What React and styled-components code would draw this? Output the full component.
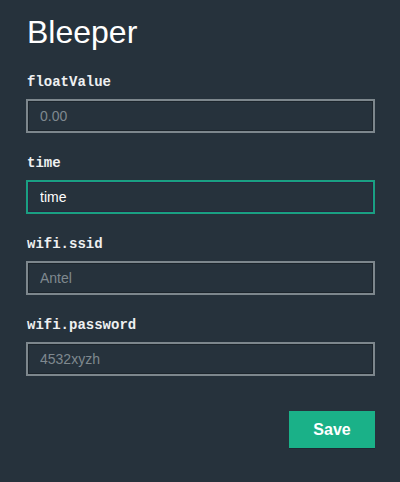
import React from "react";
import styled, { createGlobalStyle } from "styled-components";

const Global = createGlobalStyle`
  html, body { margin: 0; padding: 0; background: #26323c; }
  body { font-family: "Liberation Sans", Arial, sans-serif; }
  * { box-sizing: border-box; }
`;

const Page = styled.div`
  width: 400px;
  min-height: 482px;
  background: #26323c;
  padding: 12px 25px 0 26px;
  display: flex;
  flex-direction: column;
`;

const Title = styled.h1`
  margin: 0 0 22px 0;
  font-family: "Liberation Sans", Arial, sans-serif;
  font-weight: 400;
  font-size: 32px;
  line-height: 40px;
  color: #ffffff;
  padding-left: 1px;
`;

const Field = styled.div`
  display: flex;
  flex-direction: column;
  gap: 9px;
  margin-bottom: 22px;
`;

const Label = styled.label`
  font-family: "Liberation Mono", "Courier New", monospace;
  font-weight: 700;
  font-size: 14px;
  line-height: 16px;
  color: #eef0f1;
  padding-left: 1px;
`;

const Input = styled.input`
  width: 349px;
  height: 34px;
  margin: 0;
  padding: 0 12px;
  background: #26323c;
  border: 2px solid ${(p) => (p.$focused ? "#1a9f82" : "#7d878d")};
  box-shadow: inset 0 0 0 1px ${(p) => (p.$focused ? "#2b2440" : "#1c252c")};
  outline: none;
  font-family: "Liberation Sans", Arial, sans-serif;
  font-size: 14px;
  color: #ffffff;
  font-weight: 400;
  &::placeholder {
    color: #7f898f;
  }
`;

const Actions = styled.div`
  display: flex;
  justify-content: flex-end;
  margin-top: 13px;
`;

const SaveButton = styled.button`
  width: 86px;
  height: 37px;
  border: none;
  background: #1ab188;
  color: #ffffff;
  font-family: "Liberation Sans", Arial, sans-serif;
  font-weight: 700;
  font-size: 16px;
  cursor: pointer;
  box-shadow: 0 1px 0 #1e2a33;
`;

const fields = [
  { name: "floatValue", placeholder: "0.00" },
  { name: "time", value: "time", focused: true },
  { name: "wifi.ssid", placeholder: "Antel" },
  { name: "wifi.password", placeholder: "4532xyzh" },
];

export default function App() {
  return (
    <>
      <Global />
      <Page>
        <Title>Bleeper</Title>
        {fields.map((f) => (
          <Field key={f.name}>
            <Label>{f.name}</Label>
            <Input
              readOnly
              $focused={f.focused}
              placeholder={f.placeholder}
              defaultValue={f.value}
            />
          </Field>
        ))}
        <Actions>
          <SaveButton>Save</SaveButton>
        </Actions>
      </Page>
    </>
  );
}
